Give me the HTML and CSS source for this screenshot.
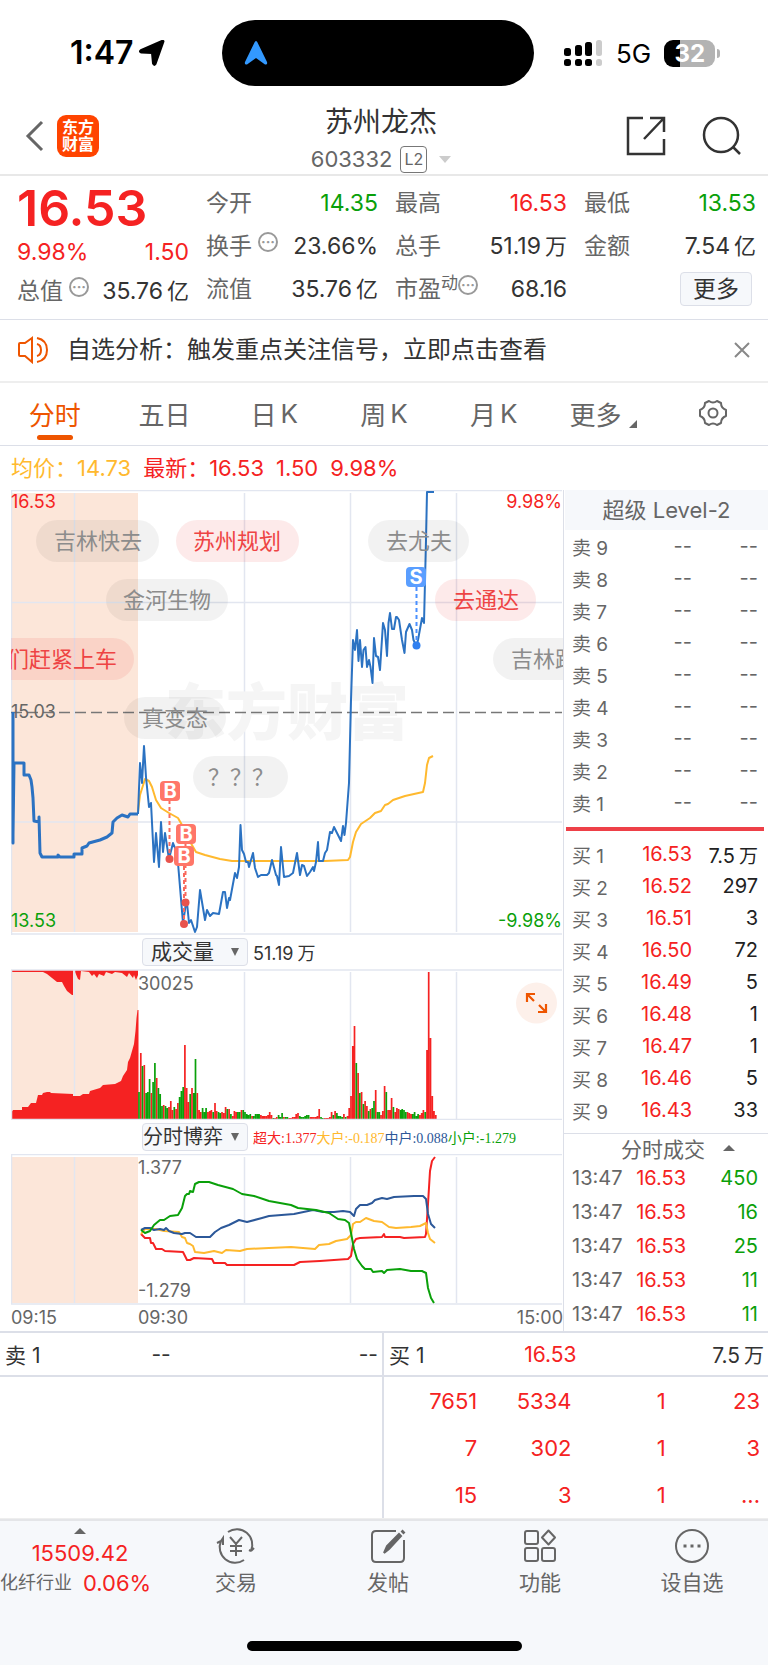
FILE: index.html
```html
<!DOCTYPE html>
<html lang="zh-CN">
<head>
  <meta charset="UTF-8" />
  <meta name="viewport" content="width=device-width, initial-scale=1.0" />
  <title>苏州龙杰 603332</title>
  <link rel="stylesheet" href="styles.css">
</head>
<body>
  <div class="status-bar">
    <div class="status-left">
      <span class="time">1:47</span>
      <svg width="26" height="26" viewBox="0 0 26 26"><path d="M24.500 1.500 16.500 24q-1.500 2-2.500-.5L13 13 2.300 12.500q-2.400-.8-.5-2.300L23 1q1.500-.4 1.500.5z" stroke="#000" stroke-width="2" stroke-linejoin="round"/></svg>
    </div>
    <div class="island">
      <svg width="24" height="26" viewBox="0 0 24 26"><path d="M12 1q1 0 1.500 1.500L23 22q.8 3-2 2.500L12 18l-9 6.500Q.2 25 1 22L10.500 2.500Q11 1 12 1z" fill="#3399ff"/></svg>
    </div>
    <div class="status-right">
      <svg width="40" height="28" viewBox="0 0 40 28">
        <g fill="#000"><rect x="1" y="9" width="7" height="8" rx="2.500"/><rect x="12" y="6" width="7" height="11" rx="2.500"/><rect x="22" y="3" width="7" height="14" rx="2.500"/><rect x="1" y="20" width="7" height="7" rx="2.500"/><rect x="12" y="20" width="7" height="7" rx="2.500"/><rect x="22" y="20" width="7" height="7" rx="2.500"/></g>
        <g fill="#ccc"><rect x="33" y="1" width="6" height="16" rx="2.500"/><rect x="33" y="20" width="6" height="7" rx="2.500"/></g>
      </svg>
      <span class="network">5G</span>
      <span class="battery-wrap"><span class="battery">32</span></span>
    </div>
  </div>

  <header class="header">
    <div class="header-left">
      <button class="icon-btn" aria-label="返回">
        <svg width="20" height="32" viewBox="0 0 20 32"><path d="M17 2 3 16l14 14" fill="none" stroke="#666" stroke-width="3"/></svg>
      </button>
      <span class="app-logo">东方<br>财富</span>
    </div>
    <div class="stock">
      <h1>苏州龙杰</h1>
      <p>603332 <span class="level">L2</span><i class="caret"></i></p>
    </div>
    <div class="header-right">
      <button class="icon-btn" aria-label="分享">
        <svg width="40" height="40" viewBox="0 0 40 40" fill="none" stroke="#333" stroke-width="2.500"><path d="M17 2H2v36h36V23M24 2h14v14M38 2 18 23"/></svg>
      </button>
      <button class="icon-btn" aria-label="搜索">
        <svg width="40" height="40" viewBox="0 0 40 40" fill="none" stroke="#333" stroke-width="2.500"><circle cx="19" cy="19" r="17"/><path d="m31 31 7 7"/></svg>
      </button>
    </div>
  </header>

  <section class="quote">
    <div class="quote-col">
      <strong class="price">16.53</strong>
      <div class="item change red"><span>9.98%</span><span>1.50</span></div>
      <div class="item"><label>总值<i class="info">···</i></label><span>35.76<small>亿</small></span></div>
    </div>
    <div class="quote-col">
      <div class="item"><label>今开</label><span class="green">14.35</span></div>
      <div class="item"><label>换手<i class="info">···</i></label><span>23.66%</span></div>
      <div class="item"><label>流值</label><span>35.76<small>亿</small></span></div>
    </div>
    <div class="quote-col">
      <div class="item"><label>最高</label><span class="red">16.53</span></div>
      <div class="item"><label>总手</label><span>51.19<small>万</small></span></div>
      <div class="item"><label>市盈<sup>动</sup><i class="info">···</i></label><span>68.16</span></div>
    </div>
    <div class="quote-col">
      <div class="item"><label>最低</label><span class="green">13.53</span></div>
      <div class="item"><label>金额</label><span>7.54<small>亿</small></span></div>
      <div class="item end"><button class="more">更多</button></div>
    </div>
  </section>

  <section class="notice">
    <svg width="32" height="28" viewBox="0 0 32 28" fill="none" stroke="#ee5500" stroke-width="2"><path d="M14 2 7 7H2q-1 0-1 1v11q0 1 1 1h5l7 6zM19 8q4 1 4 6t-4 6M19 2q10 2 10 12T19 26"/></svg>
    <span>自选分析：触发重点关注信号，立即点击查看</span>
    <button class="icon-btn" aria-label="关闭">
      <svg width="16" height="16" viewBox="0 0 16 16"><path d="m1 1 14 14M15 1 1 15" stroke="#888" stroke-width="2"/></svg>
    </button>
  </section>

  <nav class="tabs">
    <button class="active">分时</button>
    <button>五日</button>
    <button>日<span>K</span></button>
    <button>周<span>K</span></button>
    <button>月<span>K</span></button>
    <button>更多<i class="corner"></i></button>
    <button aria-label="设置">
      <svg width="30" height="28" viewBox="0 0 30 28" fill="none" stroke="#666" stroke-width="2"><path d="M11 2q4 3 8 0l4 2q0 5 5 7v6q-5 2-5 7l-4 2q-4-3-8 0l-4-2q0-5-5-7v-6q5-2 5-7z" stroke-linejoin="round"/><circle cx="15" cy="14" r="4.500"/></svg>
    </button>
  </nav>

  <p class="legend"><span class="yellow">均价：14.73</span><span class="red">最新：16.53</span><span class="red">1.50</span><span class="red">9.98%</span></p>

  <main class="market">
    <div class="charts">
      <!-- price -->
      <svg class="chart" viewBox="11 490 552 445">
        <path class="shade" d="M11 493h127v439H11z"/>
        <path class="grid" d="M74.500 493v439M244.500 493v439M350.500 493v439M456.500 493v439M11 602.500h551M11 822h551"/>
        <path class="frame" d="M11 490.500h551M11.500 490v445M11 934h551"/>
        <text class="watermark" x="165" y="735">东方财富</text>
        <path d="M11 712.500h551" stroke="#777" stroke-width="1.500" stroke-dasharray="11 5" fill="none"/>
        <g class="axis">
          <text class="t-red" x="11" y="508">16.53</text>
          <text x="11" y="718">15.03</text>
          <text class="t-green" x="11" y="927">13.53</text>
          <text class="t-red" x="562" y="508" text-anchor="end">9.98%</text>
          <text class="t-green" x="562" y="927" text-anchor="end">-9.98%</text>
        </g>
        <polyline class="line avg" points="138,812 140,795 145,779 149,781 152,787 156,800 161,808 169,813 178,818 182,825 189,840 196,852 205,855 220,859 232,861 325,861 348,860 350,857 353,842 356,832 361,824 370,818 375,813 381,811 385,805 388,804 393,800 405,796 423,792 425,783 427,765 429,758 433,756"/>
        <polyline class="line pre" points="13,712 13,843 13,835 14,763 24,763 24,775 29,775 31,780 32,787 33,798 34,821 39,822 39,817 40,853 42,857 58,857 58,855 60,857 74,857 74,854 82,854 82,848 87,846 89,843 100,840 107,837 112,833 113,822 117,818 122,815 128,817 130,814 138,814"/>
        <polyline class="line cur" points="138,814 140,763 142,783 144,746 146,777 149,807 151,803 154,862 156,833 159,867 161,822 163,852 165,833 169,859 173,843 177,853 178,863 183,923 186,903 187,903 189,923 191,920 195,932 197,927 200,890 205,920 207,910 210,916 213,913 219,914 223,892 225,892 227,908 229,898 230,900 235,873 237,878 239,867 240.500,825 242,850 244,854 246,862 248,862 249,867 253,853 255,868 258,877 261,875 267,875 269,873 272,860 276,875 277,876 279,885 281,847 284,877 289,876 293,873 297,853 300,875 302,865 304,866 307,876 310,872 313,867 314,871 316,862 318,842 319,861 323,861 325,853 327,850 330,832 332,833 334,827 337,833 341,841 343,826 344.500,835 346,823 349,783 351,700 353,640 355,650 357,630 358.500,661 360,640 362,667 363.500,650 365.500,647 367,667 369,660 370.500,667 372.500,683 374,638 376,656 378,657 380,670 383,623 385,630 387,656 388.500,623 390,613 392,629 394,629 396,617 397,617 399,620 402,640 404.500,653 406,632 409.500,624 412,630 413.500,640 416.500,646 418,640 422,618 424,623 426,540 427,492 434,492"/>
        <!-- trade marks -->
        <g class="mark buy">
          <path d="M169.500 800v59M185.500 843v60M184 866v58" stroke-dasharray="4 3"/>
          <circle cx="169.500" cy="859" r="4"/><circle cx="185.500" cy="902.500" r="4"/><circle cx="184" cy="924" r="4"/>
          <rect x="160" y="781" width="20" height="20" rx="4"/><rect x="176" y="824" width="20" height="20" rx="4"/><rect x="174" y="846" width="20" height="20" rx="4"/>
          <text x="170" y="798">B</text><text x="186" y="841">B</text><text x="184" y="863">B</text>
        </g>
        <g class="mark sell">
          <path d="M416.500 587v58" stroke-dasharray="4 3"/>
          <circle cx="416.500" cy="645.500" r="4"/>
          <rect x="406" y="567" width="20" height="20" rx="4"/>
          <text x="416" y="584">S</text>
        </g>
        <!-- bullet comments -->
        <g class="bullet">
          <rect x="36" y="520" width="123" height="42" rx="21"/><text x="54" y="549">吉林快去</text>
          <rect x="106" y="579" width="122" height="42" rx="21"/><text x="123" y="608">金河生物</text>
          <rect x="368" y="520" width="101" height="42" rx="21"/><text x="386" y="549">去尤夫</text>
          <rect x="493" y="638" width="123" height="42" rx="21"/><text x="511" y="667">吉林跑路</text>
          <rect x="124" y="697" width="102" height="42" rx="21"/><text x="142" y="726">真变态</text>
          <rect x="193" y="756" width="95" height="42" rx="21"/><text x="208" y="785">？？？</text>
        </g>
        <g class="bullet hot">
          <rect x="176" y="520" width="123" height="42" rx="21"/><text x="193" y="549">苏州规划</text>
          <rect x="435" y="579" width="101" height="42" rx="21"/><text x="453" y="608">去通达</text>
          <rect x="-40" y="638" width="174" height="42" rx="21"/><text x="7" y="667">们赶紧上车</text>
        </g>
      </svg>

      <div class="toolbar">
        <div class="picker"><select aria-label="指标一"><option>成交量</option></select></div>
        <span class="volume-sum">51.19<small>万</small></span>
      </div>

      <!-- volume -->
      <svg class="chart" viewBox="11 968 552 151">
        <path class="shade" d="M11 969h127v149H11z"/>
        <path class="auction" d="M11 969V971H43L47 973 52 977 57 981 62 981 64 985 67 990 72 994H73V969M75 969V971L78 978 80 979 81 970 89 971 92 975 94 973 97 977 99 973 104 975 106 971 112 973 115 971 122 972 127 976 129 972 133 977 134 974 136 979 138 974V969z"/>
        <path class="grid" d="M74.500 969v149M244.500 971v147M350.500 971v147M456.500 971v147"/>
        <path class="auction" d="M11 1118V1112L13 1109H22V1106H28L31 1102H36L38 1094H42L43 1092 47 1091H50L51 1092 73 1093V1095H80L83 1093H89L90 1090 100 1087 103 1084 115 1083 121 1080 123 1075 125 1072 127 1069 128 1061 130 1057 132 1050 134 1043 135.500 1030 136.500 1017 137.500 1009H138.500V1118z"/>
        <path id="volUp" class="vol up"/>
        <path id="volDown" class="vol down"/>
        <path class="frame" d="M11 969h551M11.500 969v149M11 1118.500h551"/>
        <g class="axis"><text x="138" y="989">30025</text></g>
        <circle cx="536.500" cy="1002" r="20.500" fill="#fdf0ea"/>
        <path d="M527 1001v-8h8M527 993l7 7M538 1011h8v-8M546 1011l-7-7" fill="none" stroke="#ee5500" stroke-width="2.200"/>
      </svg>

      <div class="toolbar">
        <div class="picker tight"><select aria-label="指标二"><option>分时博弈</option></select></div>
        <span class="flows"><span class="red">超大:1.377</span><span class="yellow">大户:-0.187</span><span class="navy">中户:0.088</span><span class="green">小户:-1.279</span></span>
      </div>

      <!-- money flow -->
      <svg class="chart" viewBox="11 1153 552 151">
        <path class="shade" d="M11 1156h127v146H11z"/>
        <path class="grid" d="M74.500 1156v146M244.500 1156v146M350.500 1156v146M456.500 1156v146"/>
        <path class="frame" d="M11 1153.500h551M11.500 1153v150M11 1303h551"/>
        <g class="axis"><text x="138" y="1173">1.377</text><text x="138" y="1296">-1.279</text></g>
        <polyline class="line f-red" points="141,1233 145,1237 150,1237 151,1242 153,1242 156,1248 162,1248 165,1250 183,1251 187,1259 190,1259 194,1257 212,1258 214,1262 225,1262 227,1264 294,1264 300,1261 320,1260 348,1258 351,1255 353,1243 356,1238 360,1237 382,1236 384,1233 385,1236 400,1236 404,1237 425,1236 426,1233 428,1203 430,1170 432,1160 435,1156"/>
        <polyline class="line avg" points="141,1233 145,1228 156,1228 164,1230 179,1231 182,1236 185,1237 187,1242 190,1243 193,1245 195,1251 204,1252 214,1250 222,1252 226,1249 240,1250 247,1248 269,1247 291,1246 315,1248 319,1244 329,1243 336,1240 347,1238 351,1234 353,1223 356,1221 360,1221 366,1217 374,1220 382,1221 389,1226 396,1227 411,1226 420,1225 426,1222 428,1232 430,1238 435,1242"/>
        <polyline class="line f-navy" points="141,1229 145,1227 150,1227 154,1229 160,1228 164,1229 166,1227 169,1230 174,1232 182,1233 185,1232 190,1232 196,1236 210,1236 215,1231 221,1227 229,1224 239,1219 247,1221 262,1217 269,1215 294,1213 313,1209 323,1211 334,1211 343,1210 350,1211 354,1215 356,1208 360,1204 367,1204 372,1202 375,1199 382,1197 387,1198 394,1196 414,1195 423,1195 426,1198 428,1213 431,1223 435,1227"/>
        <polyline class="line f-green" points="141,1229 145,1232 150,1230 154,1224 160,1219 164,1219 170,1215 178,1214 182,1207 185,1195 187,1193 189,1193 190,1190 193,1191 195,1183 199,1181 209,1181 218,1184 233,1188 242,1193 254,1195 269,1200 291,1204 298,1207 316,1209 329,1212 338,1218 345,1219 349,1222 351,1232 354,1248 357,1258 362,1265 365,1268 371,1268 373,1271 382,1270 384,1272 387,1269 400,1268 411,1270 422,1270 426,1272 428,1287 431,1297 434,1302"/>
      </svg>

      <div class="times"><span>09:15</span><span>09:30</span><span>15:00</span></div>
    </div>

    <aside class="book">
      <h2>超级 Level-2</h2>
      <table class="depth">
        <tr><th>卖 9</th><td>--</td><td>--</td></tr>
        <tr><th>卖 8</th><td>--</td><td>--</td></tr>
        <tr><th>卖 7</th><td>--</td><td>--</td></tr>
        <tr><th>卖 6</th><td>--</td><td>--</td></tr>
        <tr><th>卖 5</th><td>--</td><td>--</td></tr>
        <tr><th>卖 4</th><td>--</td><td>--</td></tr>
        <tr><th>卖 3</th><td>--</td><td>--</td></tr>
        <tr><th>卖 2</th><td>--</td><td>--</td></tr>
        <tr><th>卖 1</th><td>--</td><td>--</td></tr>
      </table>
      <div class="split"></div>
      <table class="depth bids">
        <tr><th>买 1</th><td>16.53</td><td>7.5<small>万</small></td></tr>
        <tr><th>买 2</th><td>16.52</td><td>297</td></tr>
        <tr><th>买 3</th><td>16.51</td><td>3</td></tr>
        <tr><th>买 4</th><td>16.50</td><td>72</td></tr>
        <tr><th>买 5</th><td>16.49</td><td>5</td></tr>
        <tr><th>买 6</th><td>16.48</td><td>1</td></tr>
        <tr><th>买 7</th><td>16.47</td><td>1</td></tr>
        <tr><th>买 8</th><td>16.46</td><td>5</td></tr>
        <tr><th>买 9</th><td>16.43</td><td>33</td></tr>
      </table>
      <h3>分时成交<i class="caret up"></i></h3>
      <table class="depth ticks">
        <tr><th>13:47</th><td>16.53</td><td>450</td></tr>
        <tr><th>13:47</th><td>16.53</td><td>16</td></tr>
        <tr><th>13:47</th><td>16.53</td><td>25</td></tr>
        <tr><th>13:47</th><td>16.53</td><td>11</td></tr>
        <tr><th>13:47</th><td>16.53</td><td>11</td></tr>
      </table>
    </aside>
  </main>

  <section class="queue">
    <div class="queue-side">
      <div class="queue-head"><span>卖 1</span><span>--</span><span>--</span></div>
    </div>
    <div class="queue-side">
      <div class="queue-head"><span>买 1</span><span class="red">16.53</span><span>7.5<small>万</small></span></div>
      <div class="orders">
        <table>
          <tr><td>7651</td><td>5334</td><td>1</td><td>23</td></tr>
          <tr><td>7</td><td>302</td><td>1</td><td>3</td></tr>
          <tr><td>15</td><td>3</td><td>1</td><td>...</td></tr>
        </table>
      </div>
    </div>
  </section>

  <footer class="footer">
    <nav class="bottom-nav">
      <a class="index" href="#"><i class="caret up"></i><b>15509.42</b><span>化纤行业 <b>0.06%</b></span></a>
      <a href="#">
        <svg viewBox="0 0 40 36"><path d="M12 4A15.500 15.500 0 0 1 35 23M35 23l3-3M35 23l-2-1M28 32A15.500 15.500 0 0 1 5 13M5 13l-4 2M5 13l2-3v7M14 9l6 7 6-7M20 16v12M14 18h12M14 23h12"/></svg>
        交易
      </a>
      <a href="#">
        <svg viewBox="0 0 40 36"><path d="M28 3H8Q4 3 4 7v23q0 4 4 4h24q4 0 4-4V12"/><path d="m16 25 3-7L31 6l2 2-12 13z" fill="#666"/><path d="m34 5 2-2" stroke-width="4"/></svg>
        发帖
      </a>
      <a href="#">
        <svg viewBox="0 0 40 36"><rect x="5" y="3" width="13" height="13" rx="2"/><rect x="5" y="20" width="13" height="13" rx="2"/><rect x="22" y="20" width="13" height="13" rx="2"/><path d="m28.500 2.500 6.500 7-6.500 7-6.500-7z" stroke-linejoin="round"/></svg>
        功能
      </a>
      <a href="#">
        <svg viewBox="0 0 40 36"><circle cx="20" cy="18" r="16"/><path d="M11.500 18h3M18.500 18h3M25.500 18h3" stroke-width="3"/></svg>
        设自选
      </a>
    </nav>
    <div class="home-indicator"></div>
  </footer>

  <script src="volume.js"></script>
</body>
</html>
```
FILE: styles.css
```css
:root {
  --red: #f52222;
  --green: #0aa00a;
  --yellow: #ffb92e;
  --navy: #2c5899;
  --orange: #ee5500;
  --text: #333;
  --muted: #666;
  --line: #dcdfe8;
  --font: Inter, "Noto Sans CJK SC", sans-serif;
}
* {
  box-sizing: border-box;
}
body {
  margin: 0;
  font-family: var(--font);
  color: var(--text);
  background: #fff;
}
h1, h2, h3, p {
  margin: 0;
  font-weight: 400;
}
button, select {
  border: 0;
  padding: 0;
  background: none;
  font: inherit;
  color: inherit;
}
svg {
  display: block;
}
table {
  width: 100%;
  border-collapse: collapse;
  table-layout: fixed;
}
th, td {
  padding: 0;
  font-weight: 400;
  text-align: right;
}
small {
  font-size: 22px;
  margin-left: 4px;
}
.red { color: var(--red); }
.green { color: var(--green); }
.yellow { color: var(--yellow); }
.navy { color: var(--navy); }
.icon-btn {
  display: flex;
}
.caret {
  display: inline-block;
  border: 6px solid transparent;
  border-top: 7px solid #ccc;
  border-bottom: 0;
}
.caret.up {
  border-top: 0;
  border-bottom: 6px solid #666;
}

/* status bar */
.status-bar {
  display: grid;
  grid-template-columns: 1fr 312px 1fr;
  align-items: center;
  height: 96px;
  padding: 10px 24px 0 12px;
}
.status-left, .status-right {
  display: flex;
  align-items: center;
}
.status-left {
  gap: 6px;
  padding-left: 58px;
}
.time {
  font-size: 32px;
  font-weight: 600;
  line-height: 36px;
  color: #000;
}
.island {
  display: flex;
  align-items: center;
  height: 66px;
  padding-left: 22px;
  border-radius: 33px;
  background: #000;
}
.status-right {
  gap: 13px;
  padding-left: 29px;
}
.network {
  font-size: 26px;
  color: #000;
}
.battery-wrap {
  display: flex;
  align-items: center;
  gap: 2px;
}
.battery-wrap::after {
  content: "";
  width: 3px;
  height: 9px;
  border-radius: 0 3px 3px 0;
  background: #b3b3b3;
}
.battery {
  width: 51px;
  height: 27px;
  border-radius: 9px;
  background: linear-gradient(90deg, #000 32%, #b3b3b3 32%);
  color: #fff;
  font-size: 24px;
  font-weight: 700;
  line-height: 27px;
  text-align: center;
}

/* header */
.header {
  display: grid;
  grid-template-columns: 1fr auto 1fr;
  align-items: center;
  height: 80px;
  padding: 0 26px 0 25px;
  border-bottom: 2px solid #e8e8e8;
}
.header-left, .header-right {
  display: flex;
  align-items: center;
}
.header-left {
  gap: 12px;
}
.header-right {
  justify-content: flex-end;
  gap: 36px;
}
.app-logo {
  padding: 4px 5px;
  border-radius: 9px;
  background: #ff4400;
  color: #fff;
  font-size: 16px;
  font-weight: 700;
  line-height: 17px;
}
.stock {
  padding: 6px 5px 0 0;
  text-align: center;
}
.stock h1 {
  font-size: 28px;
  line-height: 40px;
}
.stock p {
  display: flex;
  align-items: center;
  justify-content: center;
  gap: 8px;
  font-size: 22px;
  line-height: 34px;
  color: var(--muted);
}
.level {
  padding: 0 3px;
  border: 1px solid #777;
  border-radius: 4px;
  font-size: 16px;
  line-height: 25px;
}
.stock .caret {
  margin-left: 4px;
}

/* quote */
.quote {
  display: grid;
  grid-template-columns: repeat(4, 1fr);
  gap: 17px;
  height: 144px;
  padding: 5px 12px 0 17px;
  border-bottom: 1px solid var(--line);
  font-size: 23px;
}
.item {
  display: flex;
  align-items: center;
  justify-content: space-between;
  height: 43px;
  line-height: 32px;
  white-space: nowrap;
}
.item label {
  display: flex;
  align-items: center;
  color: var(--muted);
}
.item sup {
  align-self: flex-start;
  font-size: 17px;
  line-height: 20px;
}
.item.end {
  justify-content: flex-end;
}
.info {
  width: 20px;
  height: 20px;
  margin: 0 0 8px 6px;
  border: 2px solid #999;
  border-radius: 50%;
  color: #999;
  font-size: 14px;
  font-style: normal;
  font-weight: 700;
  line-height: 16px;
  text-align: center;
}
sup + .info {
  margin-left: 0;
}
.price {
  display: block;
  height: 54px;
  color: var(--red);
  font-size: 50px;
  font-weight: 600;
  line-height: 54px;
}
.change {
  height: 34px;
}
.more {
  width: 72px;
  height: 34px;
  margin-right: 4px;
  border: 1px solid var(--line);
  border-radius: 4px;
  background: #f6f8fb;
}

/* notice */
.notice {
  display: flex;
  align-items: center;
  gap: 17px;
  height: 63px;
  padding: 0 18px 2px;
  border-bottom: 2px solid #eee;
  font-size: 24px;
  line-height: 32px;
}
.notice .icon-btn {
  margin-left: auto;
}

/* period tabs */
.tabs {
  display: grid;
  grid-template-columns: repeat(7, 1fr);
  height: 63px;
  border-bottom: 1px solid var(--line);
}
.tabs button {
  position: relative;
  display: flex;
  align-items: center;
  justify-content: center;
  gap: 4px;
  padding-bottom: 2px;
  font-size: 26px;
  color: var(--muted);
}
.tabs .active {
  color: var(--orange);
}
.tabs .active::after {
  content: "";
  position: absolute;
  bottom: 5px;
  width: 36px;
  height: 5px;
  border-radius: 3px;
  background: var(--orange);
}
.corner {
  align-self: flex-end;
  margin: 0 0 15px 4px;
  border: 4px solid transparent;
  border-right-color: #666;
  border-bottom-color: #666;
}
.legend {
  display: flex;
  gap: 12px;
  padding-left: 11px;
  font-size: 22px;
  line-height: 44px;
}

/* charts */
.market {
  display: grid;
  grid-template-columns: 1fr 204px;
  border-bottom: 2px solid var(--line);
}
.charts {
  padding-left: 11px;
  border-right: 1px solid var(--line);
}
.chart {
  width: 100%;
}
.shade { fill: #fce6d9; }
.grid, .frame {
  fill: none;
  stroke: #e2e6f0;
  stroke-width: 1.5;
}
.watermark {
  font-size: 61px;
  font-weight: 900;
  fill: #f5f5f5;
}
.axis text {
  font-size: 18px;
  fill: #666;
}
.axis .t-red { fill: var(--red); }
.axis .t-green { fill: var(--green); }
.line {
  fill: none;
  stroke-width: 2;
  stroke-linejoin: round;
}
.avg { stroke: var(--yellow); }
.cur { stroke: #2b72c2; }
.pre {
  stroke: #2b72c2;
  stroke-width: 3;
}
.f-red { stroke: var(--red); }
.f-navy { stroke: var(--navy); }
.f-green { stroke: var(--green); }
.mark text {
  fill: #fff;
  font-size: 20px;
  font-weight: 700;
  text-anchor: middle;
}
.mark path {
  stroke-width: 2;
}
.buy {
  fill: #ff7668;
  stroke: none;
}
.buy path { stroke: #f96a5e; }
.buy circle { fill: #e8534c; }
.sell { fill: #5a9eff; }
.sell path { stroke: #4a90ff; }
.sell circle { fill: #2f80f0; }
.bullet rect { fill: rgba(0, 0, 0, 0.05); }
.bullet text {
  fill: #8c8c8c;
  font-size: 22px;
}
.hot rect { fill: rgba(238, 50, 50, 0.1); }
.hot text { fill: #ee4444; }
.auction { fill: var(--red); }
.vol { stroke-width: 1.7; }
.up { stroke: var(--red); }
.down { stroke: var(--green); }
.toolbar {
  display: flex;
  align-items: center;
  gap: 5px;
  height: 34px;
  padding-left: 131px;
}
.picker {
  display: flex;
  align-items: center;
  justify-content: space-between;
  width: 106px;
  height: 28px;
  padding: 0 8px;
  border: 1px solid var(--line);
  border-radius: 4px;
  background: #f6f8fb;
  font-size: 21px;
}
.picker::after {
  content: "";
  border: 4px solid transparent;
  border-top: 8px solid #666;
  border-bottom: 0;
}
.picker.tight {
  padding-left: 0;
  font-size: 20px;
}
.picker select {
  appearance: none;
  height: 26px;
  line-height: 26px;
}
.volume-sum {
  font-size: 18px;
}
.volume-sum small {
  font-size: 18px;
}
.flows {
  font: 14px "Liberation Serif", "Noto Sans CJK SC", serif;
  white-space: nowrap;
}
.times {
  display: grid;
  grid-template-columns: 127px 1fr auto;
  font-size: 18px;
  line-height: 26px;
  color: var(--muted);
}

/* order book */
.book h2 {
  margin-left: 1px;
  background: #f6f8fb;
  color: var(--muted);
  font-size: 22px;
  line-height: 40px;
  text-align: center;
}
.depth {
  font-size: 20px;
}
.depth tr {
  height: 32px;
}
.depth th {
  width: 62px;
  padding-left: 8px;
  color: var(--muted);
  font-size: 19px;
  text-align: left;
}
.depth td {
  color: var(--muted);
}
.depth td:last-child {
  width: 76px;
  padding-right: 10px;
}
.depth small {
  font-size: 19px;
}
.split {
  height: 4px;
  margin: 9px 4px 7px 2px;
  background: #ee4048;
}
.bids td { color: var(--red); }
.bids td:last-child { color: #222; }
.book h3 {
  display: flex;
  align-items: center;
  justify-content: center;
  gap: 18px;
  height: 28px;
  margin-top: 7px;
  padding-left: 24px;
  border-top: 1px solid var(--line);
  color: var(--muted);
  font-size: 21px;
}
.ticks tr { height: 34px; }
.ticks th { font-size: 20px; }
.ticks td { color: var(--red); }
.ticks td:nth-child(2) { padding-right: 6px; }
.ticks td:last-child { color: var(--green); }

/* queue */
.queue {
  display: grid;
  grid-template-columns: 1fr 1fr;
  border-bottom: 1px solid #eee;
}
.queue-side:first-child {
  border-right: 2px solid var(--line);
}
.queue-head {
  display: grid;
  grid-template-columns: 4fr 4fr 5fr 5fr;
  align-items: center;
  height: 44px;
  padding: 0 4px 0 5px;
  border-bottom: 2px solid var(--line);
  font-size: 21px;
}
.queue-head span {
  text-align: right;
}
.queue-head span:first-child {
  text-align: left;
}
.queue-head span:last-child {
  grid-column: 3 / 5;
}
.queue-side:last-child .queue-head {
  grid-template-columns: repeat(4, 1fr);
}
.queue-head small {
  font-size: 20px;
}
.orders {
  padding-left: 7px;
}
.orders td {
  height: 47px;
  padding-right: 8px;
  font-size: 22px;
  color: var(--red);
}

/* footer */
.footer {
  height: 146px;
  border-top: 2px solid #e4e5e8;
  background: #f6f8fb;
}
.bottom-nav {
  display: grid;
  grid-template-columns: 160px repeat(4, 1fr);
  height: 120px;
}
.bottom-nav a {
  display: flex;
  flex-direction: column;
  align-items: center;
  gap: 4px;
  padding-top: 7px;
  color: var(--muted);
  font-size: 21px;
  line-height: 30px;
  text-decoration: none;
  white-space: nowrap;
}
.bottom-nav svg {
  width: 40px;
  height: 36px;
  fill: none;
  stroke: #666;
  stroke-width: 2;
}
.bottom-nav .index {
  align-items: flex-start;
  gap: 0;
}
.index .caret {
  align-self: center;
  margin-bottom: 4px;
}
.index b {
  color: var(--red);
  font-size: 22px;
  font-weight: 400;
}
.index > b {
  align-self: center;
}
.index span {
  display: flex;
  gap: 11px;
  font-size: 18px;
}
.home-indicator {
  width: 275px;
  height: 10px;
  margin: 0 auto;
  border-radius: 5px;
  background: #000;
}
```
FILE: volume.js
```js
// one entry per minute: r = up, g = down, then bar height
const volume = `g27 r66 g53 r54 g26 g27 g40 r26 g37 g56 r41 g31 g25 g13 r14 g13 g11 r12 r18 r9 g12 r10 r16 g22 g28 g32
r74 r31 r17 g25 r31 g26 g60 r26 r9 r7 g11 g7 g11 r7 r8 r9 g7 r16 r8 g7 g6 r7 r6 r12 g10 r10 g5 r3 r8 r7 g7 g7 r9 g9
g7 g5 g4 g5 r3 g3 g5 g5 g5 r4 r3 r3 r3 r4 r7 r4 g1 r1 r2 g4 g2 g6 r2 g2 g2 r1 r1 r2 r2 r5 r6 g3 g2 g2 g3 g4 g4 r2
r2 r2 r2 r3 r10 g2 g1 r1 r1 r1 r2 r7 g4 r8 g6 g3 g3 g2 r5 g2 r3 r11 r23 r73 r93 g56 r46 g26 r27 g15 r18 r13 g8 r10
g11 g18 r29 g7 g7 r4 r8 r33 g27 r9 r9 r21 g12 r7 r11 r10 g9 g10 g9 g7 r7 r6 r5 g5 g7 g3 g5 r4 r6 r9 g7 r69 r147 r81
r23 r8 r4`.split(/\s+/);

const start = 139;
const step = 424 / 240;
const paths = { r: "", g: "" };

volume.forEach((bar, i) => {
  const x = (start + i * step).toFixed(1);
  paths[bar[0]] += `M${x} 1118v-${bar.slice(1)}`;
});

document.getElementById("volUp").setAttribute("d", paths.r);
document.getElementById("volDown").setAttribute("d", paths.g);
```
